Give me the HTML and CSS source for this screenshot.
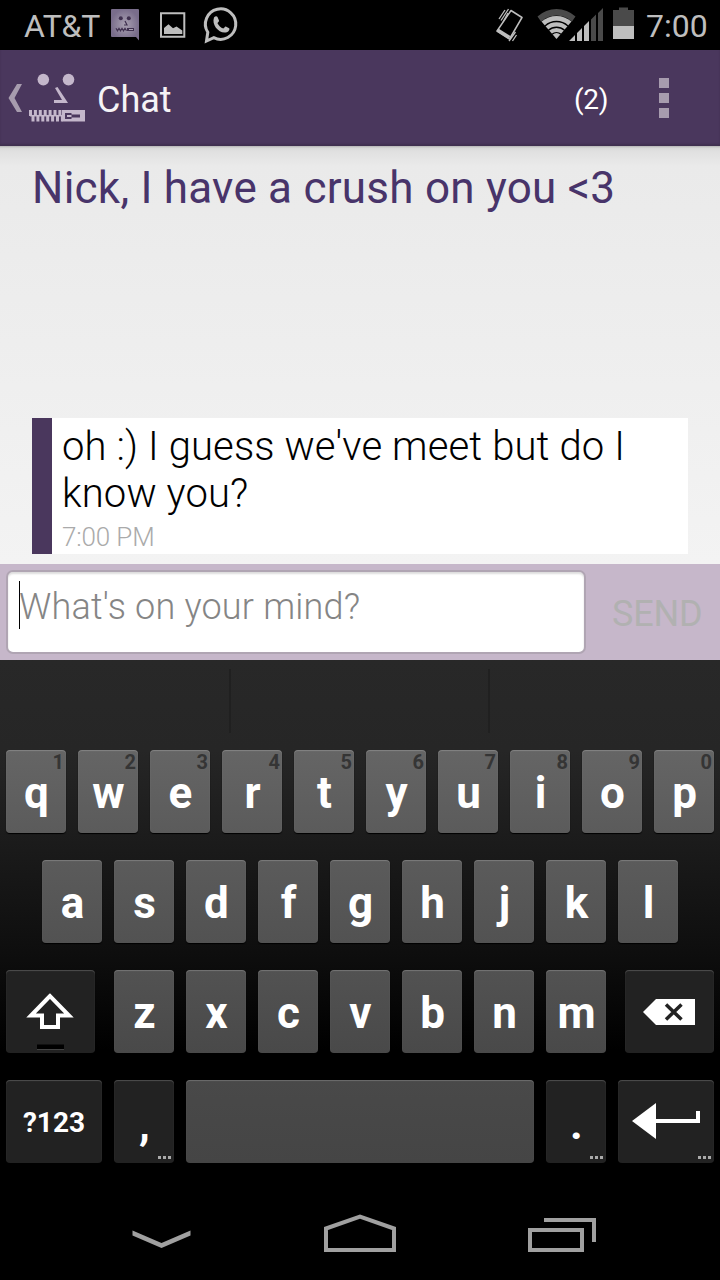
FILE: index.html
```html
<!DOCTYPE html>
<html lang="en">
<head>
<meta charset="utf-8">
<title>Chat</title>
<link rel="stylesheet" href="styles.css">
</head>
<body>
<div class="phone">
  <header class="status">
    <span class="carrier">AT&amp;T</span>
    <svg class="status-left" width="130" height="50" viewBox="110 0 130 50">
      <defs><radialGradient id="face"><stop offset="0" stop-color="#a9a1b2"/><stop offset="1" stop-color="#796d8b"/></radialGradient></defs>
      <path d="M112 9h26a1 1 0 0 1 1 1v30.500l-3-3.500h-24a1 1 0 0 1-1-1V10a1 1 0 0 1 1-1z" fill="url(#face)"/>
      <g fill="#3f304f"><circle cx="120.800" cy="18.300" r="2"/><circle cx="128.800" cy="18.300" r="2"/><path d="M127 28h7v3h-7z"/></g>
      <path d="M125 21l2 4h-3M116 28.300l1.500 2.500 1.500-2.500 1.500 2.500 1.500-2.500 1.500 2.500 1.500-2.500 1.500 2.500" fill="none" stroke="#3f304f" stroke-width="1.200"/>
      <path d="M129 29.500h4" stroke="#a9a1b2"/>
      <path d="M161 13.200h23.300v23.600H161z" fill="none" stroke="#bebebe" stroke-width="2"/>
      <path d="M164 34v-6l4.500-3.800 4.500 4 3.500-1.700 5.800 4v3.500z" fill="#bebebe"/>
      <path d="M207.800 32.300A15.200 15.200 0 1 1 213.800 37.700L206.500 41z" fill="none" stroke="#bebebe" stroke-width="3"/>
      <path d="M214 17.500c1-1.500 3-1.700 3.500-.5l1.500 3.500c.3.800-1.200 2-1.500 2.700 1.500 2.700 3 4.200 5.800 5.300.8-.4 1.700-2.300 2.500-2l3.300 1.700c1 .7-.2 3-1.700 3.700-7 3-16.300-6.200-13.400-14.400z" fill="#bebebe"/>
    </svg>
    <svg class="status-right" width="160" height="50" viewBox="480 0 160 50">
      <g fill="none" stroke="#bebebe">
        <path d="M511 10.500l11 7-12.500 21.500-12.500-8z" stroke-width="1.500" stroke-linejoin="round"/>
        <path d="M497.500 30l12 7.500" stroke-width="3.500"/>
        <path d="M499 19l6-9M501 20.500l7.500-11.500M503 22l5-9M509 41l6.500-9M512.500 41l4-6" stroke-width="1.300"/>
      </g>
      <path d="M537.500 16.500a28 28 0 0 1 38 0l-3.500 5a23 23 0 0 0-31 0z" fill="#4a4a4a"/>
      <path d="M541.500 21.500a23 23 0 0 1 30 0L556.500 39z" fill="#bebebe"/>
      <path d="M545 26a17 17 0 0 1 23 0M548.500 30.300a12 12 0 0 1 16 0M552 34.300a7 7 0 0 1 9 0" fill="none" stroke="#000" stroke-width="1.300"/>
      <path d="M569 41l6-6v6zM577 33l5-5v13h-5zM584 26l5-5v20h-5z" fill="#bebebe"/>
      <path d="M591 19.500l5-5V41h-5zM598 13l5-5v33h-5z" fill="#4a4a4a"/>
      <path d="M613 10h6V7.500h9V10h6v16h-21z" fill="#4a4a4a"/><path d="M613 26h21v13h-21z" fill="#bebebe"/>
    </svg>
    <span class="clock">7:00</span>
  </header>

  <nav class="bar">
    <svg width="90" height="96" viewBox="0 50 90 96">
      <path d="M17 84h5l-7.500 14 7.500 14h-5L8.500 98z" fill="#a79cae"/>
      <g fill="#c4b7cb"><circle cx="43.300" cy="79.600" r="5.800"/><circle cx="68.500" cy="79.600" r="5.800"/>
      <path d="M57.500 87l10.500 16H54v-3h8L55 88z"/>
      <path d="M62 110h23v11.500H62z"/></g>
      <g fill="none" stroke="#c4b7cb"><path d="M29 113h33M31.500 118.500h31" stroke-width="6" stroke-dasharray="3 1.900"/><path d="M30 115.700h32" stroke-width="1.500"/></g>
      <path d="M65 113h6.500v1.500H80v3h-8.500v1.500H65z" fill="#4a375d"/><path d="M67 115h4.500v2H67z" fill="#c4b7cb"/>
    </svg>
    <h1 class="title">Chat</h1>
    <span class="count">(2)</span>
    <span class="more"><i class="dot"></i><i class="dot"></i><i class="dot"></i></span>
  </nav>

  <main class="thread">
    <h2 class="topic">Nick, I have a crush on you &lt;3</h2>
    <article class="message">
      <p class="text">oh :) I guess we've meet but do I<br>know you?</p>
      <p class="time">7:00 PM</p>
    </article>
  </main>

  <section class="composer">
    <div class="field"><span class="caret"></span><span class="hint">What's on your mind?</span></div>
    <span class="send">SEND</span>
  </section>

  <section class="keyboard">
    <div class="suggest"><span class="slot"></span><span class="slot"></span><span class="slot"></span></div>
    <div class="keys row1">
      <div class="key">q<small class="num">1</small></div><div class="key">w<small class="num">2</small></div><div class="key">e<small class="num">3</small></div><div class="key">r<small class="num">4</small></div><div class="key">t<small class="num">5</small></div><div class="key">y<small class="num">6</small></div><div class="key">u<small class="num">7</small></div><div class="key">i<small class="num">8</small></div><div class="key">o<small class="num">9</small></div><div class="key">p<small class="num">0</small></div>
    </div>
    <div class="keys row2">
      <div class="key">a</div><div class="key">s</div><div class="key">d</div><div class="key">f</div><div class="key">g</div><div class="key">h</div><div class="key">j</div><div class="key">k</div><div class="key">l</div>
    </div>
    <div class="keys row3">
      <div class="key dark edge">
        <svg width="89" height="83" viewBox="6 970 89 83"><path d="M50 996L31 1015.500H42V1027H58V1015.500H69z" fill="none" stroke="#fff" stroke-width="4"/><path d="M37 1044.500h27v5H37z" fill="#000"/><path d="M37 1049.500h27" stroke="#444"/></svg>
      </div>
      <div class="key">z</div><div class="key">x</div><div class="key">c</div><div class="key">v</div><div class="key">b</div><div class="key">n</div><div class="key">m</div>
      <div class="key dark edge">
        <svg width="89" height="83" viewBox="625 970 89 83"><path d="M643 1012l13-13h39v26h-39z" fill="#fff"/><path d="M666 1004.500l15.500 15M681.500 1004.500l-15.500 15" stroke="#222" stroke-width="3.500"/></svg>
      </div>
    </div>
    <div class="keys row4">
      <div class="key dark wide symbols">?123</div>
      <div class="key dark mark">,<small class="ellipsis"><i></i><i></i><i></i></small></div>
      <div class="key space"></div>
      <div class="key dark mark">.<small class="ellipsis"><i></i><i></i><i></i></small></div>
      <div class="key dark wide">
        <svg width="96" height="83" viewBox="618 1080 96 83"><path d="M632 1121l24-18v16h40v-8h4v12h-44v16z" fill="#fff"/></svg>
        <small class="ellipsis"><i></i><i></i><i></i></small>
      </div>
    </div>
  </section>

  <footer class="system">
    <svg width="720" height="96" viewBox="0 1184 720 96">
      <g fill="none" stroke="#a0a0a0" stroke-width="4">
        <path d="M132.500 1230.500l29 12.500 29-12.500v5l-29 12.500-29-12.500z" fill="#a0a0a0" stroke="none"/>
        <path d="M326 1250v-21.500l34-12 34 12V1250z"/>
        <path d="M530 1230h52v20h-52zM544 1220h50v22"/>
      </g>
    </svg>
  </footer>
</div>
</body>
</html>
```
FILE: styles.css
```css
* { box-sizing: border-box; }
body { margin: 0; background: #000; font-family: Roboto, "Liberation Sans", sans-serif; }
h1, h2, p { margin: 0; font-weight: 400; }
svg { display: block; flex: none; }
.phone { width: 720px; height: 1280px; overflow: hidden; display: flex; flex-direction: column; background: #000; }

.status { height: 50px; flex: none; display: flex; align-items: center; color: #bebebe; white-space: nowrap; }
.carrier { width: 110px; padding: 1px 0 0 24px; font-size: 32px; font-weight: 400; letter-spacing: -.2px; }
.status-right { margin-left: 240px; }
.clock { padding: 1px 0 0 6px; font-size: 32px; font-weight: 400; }

.bar { height: 96px; flex: none; display: flex; align-items: center; background: #4a375d; color: #f5f3f6; box-shadow: inset 0 -2px 2px #403050; }
.title { width: 484px; padding: 3px 0 0 7px; font-size: 36px; }
.count { width: 85px; padding-top: 3px; font-size: 28px; letter-spacing: -.3px; color: #fff; }
.more { display: flex; flex-direction: column; gap: 5px; }
.dot { width: 10px; height: 10px; background: #a79cae; }

.thread { height: 418px; flex: none; padding: 15px 32px 10px; display: flex; flex-direction: column; justify-content: space-between; background: linear-gradient(#b5b5b5 0, #d8d8d8 2px, #e0e0e0 5px, #eaeaea 20px, #f3f3f3); }
.topic { font-size: 44px; line-height: 54px; letter-spacing: .24px; color: #48346a; white-space: nowrap; }
.message { height: 136px; border-left: 20px solid #4a375d; padding: 5px 10px 0; background: #fff; white-space: nowrap; }
.text { font-size: 40px; font-weight: 300; line-height: 47px; letter-spacing: .12px; color: #000; }
.time { padding-top: 5px; font-size: 26px; font-weight: 300; line-height: 30px; letter-spacing: -.15px; color: #aaa; }

.composer { height: 96px; flex: none; padding: 6px 0 6px 6px; display: flex; background: #c6b7ca; }
.field { width: 580px; height: 84px; display: flex; align-items: flex-start; padding: 9px 11px; border: 2px solid #b0a5b3; border-radius: 7px; background: #fff; box-shadow: inset 0 2px 2px #ddd; }
.caret { width: 1px; height: 48px; background: #000; }
.hint { margin-left: -1px; padding-top: 5px; font-size: 36px; font-weight: 300; letter-spacing: .2px; color: #858585; white-space: nowrap; }
.send { padding: 23px 0 0 26px; font-size: 36px; letter-spacing: -.2px; color: #b1b1b1; }

.keyboard { height: 524px; flex: none; background: linear-gradient(#282828 0, #262626 90px, #0d0d0d 300px, #000 390px); }
.suggest { height: 90px; padding: 9px 0 17px; display: flex; }
.slot { width: 231px; border-right: 2px solid #202020; }
.slot + .slot { width: 259px; }
.slot:last-child { flex: 1; border: 0; }
.keys { height: 110px; padding: 0 6px; display: flex; gap: 12px; }
.key { position: relative; width: 60px; height: 83px; flex: none; padding: 3px 0 0 1px; display: flex; align-items: center; justify-content: center; border-radius: 4px; color: #fff; font-size: 44px; font-weight: 700; background: linear-gradient(#656565, #5b5b5b); box-shadow: inset 0 1px 1px rgba(255,255,255,.2), 0 1px 1px #000; }
.row2 { padding-left: 42px; }
.row2 .key { background: linear-gradient(#5b5b5b, #525252); }
.row3 .key { background: linear-gradient(#525252, #494949); }
.row4 .key { background: linear-gradient(#494949, #454545); }
.keys .dark { background: #222; }
.edge { width: 89px; padding: 0; }
.edge:first-child { margin-right: 7px; }
.edge:last-child { margin-left: 7px; }
.wide { width: 96px; padding: 0; }
.symbols { padding-top: 2px; font-size: 28px; }
.mark { padding-top: 4px; padding-left: 1px; }
.space { width: 348px; }
.num { position: absolute; top: 0; right: 2px; font-size: 20px; color: #353535; }
.ellipsis { position: absolute; right: 3px; bottom: 4px; display: flex; gap: 2px; }
.ellipsis i { width: 3px; height: 3px; background: #aaa; }
.system { height: 96px; }
```
